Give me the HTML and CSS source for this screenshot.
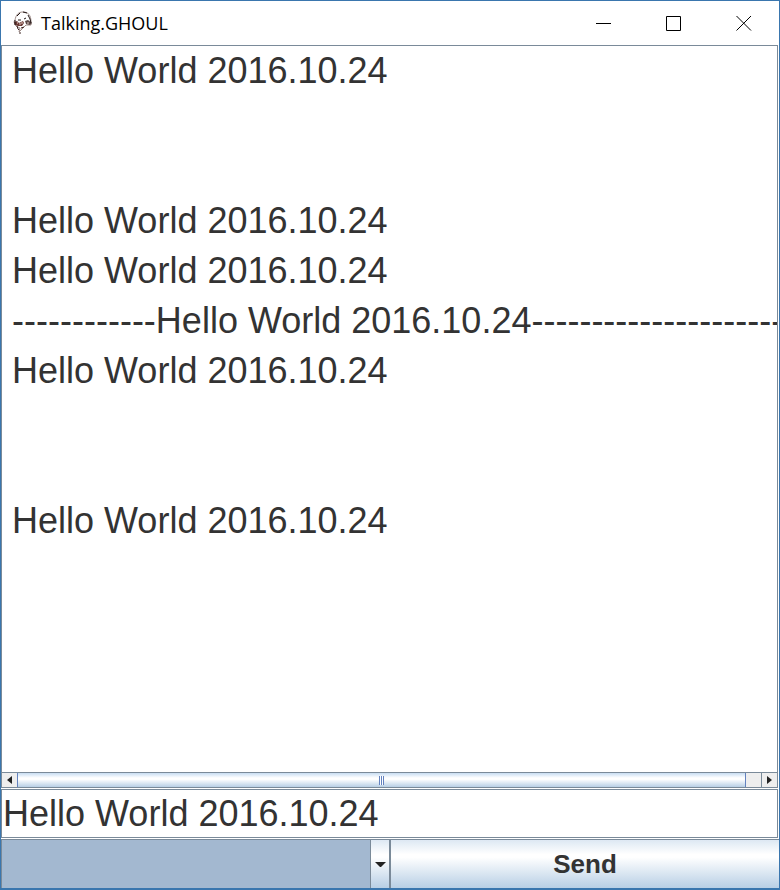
FILE: index.html
```html
<!DOCTYPE html>
<html lang="en">
<head>
    <meta charset="UTF-8">
    <meta name="viewport" content="width=device-width, initial-scale=1.0">
    <title>Talking.GHOUL</title>
    <link rel="stylesheet" href="styles.css">
</head>
<body>
    <div class="window">
        <div class="titlebar">
            <svg class="logo" viewBox="0 0 20 24" width="20" height="24">
                <path d="M2 9 C3 4 5 1 10 1 C15 1 18 4 18 11 L18 14 L13 14 L10 17 L6 21 L7 17 L3 15 L1 11 Z" fill="#fff" stroke="#9d8a86" stroke-width="1"/>
                <path d="M1 11 L4 10 L6 12 L10 10 L11 12 L9 15 L5 15 L2 14 Z" fill="#6b3a35"/>
                <path d="M12 10 L15 9 L19 12 L17 14 L13 13 Z" fill="#5b4846"/>
                <path d="M2 9 L2 14 M4 5 L7 2 M10 1 L14 2 M15 4 L17 8 L18 12 M5 9 H8 M11 8 L13 7" fill="none" stroke="#241817" stroke-width="1"/>
                <path d="M6 13 H8 M9 11 V13 M14 12 H16 M4 12 H5" stroke="#e8cfc8" stroke-width="1"/>
                <path d="M4 15 L5 18 L6 19 M8 17 L11 16 M6 22 H8" fill="none" stroke="#3b2220" stroke-width="1"/>
            </svg>
            <h1>Talking.GHOUL</h1>
            <div class="controls">
                <button type="button" aria-label="Minimize">
                    <svg width="16" height="16" viewBox="0 0 16 16"><path d="M0 8.5H15"/></svg>
                </button>
                <button type="button" aria-label="Maximize">
                    <svg width="16" height="16" viewBox="0 0 16 16"><path d="M.5 1.5H14.5V15.5H.5Z"/></svg>
                </button>
                <button type="button" aria-label="Close">
                    <svg width="16" height="16" viewBox="0 0 16 16"><path d="M.5 1L15 15.5M15 1L.5 15.5"/></svg>
                </button>
            </div>
        </div>

        <textarea class="messages" aria-label="Messages" wrap="off" readonly> Hello World 2016.10.24


 Hello World 2016.10.24
 Hello World 2016.10.24
 ------------Hello World 2016.10.24------------------------
 Hello World 2016.10.24


 Hello World 2016.10.24</textarea>

        <div class="scrollbar">
            <button type="button" class="scroll-btn" aria-label="Scroll left">
                <svg width="5" height="8" viewBox="0 0 5 8"><path d="M5 0V8L0 4Z"/></svg>
            </button>
            <div class="track">
                <div class="thumb"><span class="grip"></span></div>
            </div>
            <button type="button" class="scroll-btn" aria-label="Scroll right">
                <svg width="5" height="8" viewBox="0 0 5 8"><path d="M0 0V8L5 4Z"/></svg>
            </button>
        </div>

        <input class="message-input" type="text" aria-label="Message" value="Hello World 2016.10.24">

        <div class="bottom">
            <div class="combo">
                <select aria-label="Recipient"><option value=""></option></select>
                <span class="combo-arrow">
                    <svg width="11" height="5" viewBox="0 0 11 5"><path d="M0 0H11L6 5H5Z"/></svg>
                </span>
            </div>
            <button type="button" class="send">Send</button>
        </div>
    </div>

    <script>
        // add the typed message to the list
        const input = document.querySelector(".message-input");
        const messages = document.querySelector(".messages");

        function sendMessage() {
            if (input.value.trim() !== "") {
                messages.value += "\n " + input.value;
                messages.scrollTop = messages.scrollHeight;
            }
        }

        document.querySelector(".send").addEventListener("click", sendMessage);
    </script>
</body>
</html>
```

FILE: styles.css
```css
:root {
    --frame: #3a76ae;
    --line: #7a8a99;
    --thumb-line: #6382bf;
    --text: #333;
    --shine: linear-gradient(#dde8f3 0%, #fff 30%, #fff 36%, #b8cfe5 100%);
}

* {
    box-sizing: border-box;
}

body {
    margin: 0;
    font-family: "Liberation Sans", Arial, sans-serif;
    color: var(--text);
}

button,
input,
select,
textarea {
    margin: 0;
    border-radius: 0;
    font-family: inherit;
    color: inherit;
    outline: none;
}

.window {
    display: flex;
    flex-direction: column;
    height: 100vh;
    border: 1px solid var(--frame);
    border-bottom-width: 2px;
    background: #fff;
}

/* Title bar */
.titlebar {
    display: flex;
    align-items: center;
    height: 44px;
    padding-left: 12px;
}

.titlebar h1 {
    margin: 0 0 0 8px;
    font-family: "Open Sans", "Noto Sans", sans-serif;
    font-size: 18px;
    font-weight: normal;
    line-height: 24px;
    color: #000;
}

.controls {
    display: flex;
    height: 42px;
    margin-left: auto;
}

.controls button {
    display: flex;
    align-items: center;
    justify-content: center;
    width: 70px;
    padding: 0;
    border: none;
    background: none;
}

.controls path {
    fill: none;
    stroke: #000;
}

/* Message list */
.messages {
    display: block;
    flex: 1;
    width: calc(100% - 1px);
    padding: 0;
    border: 1px solid var(--line);
    border-bottom: none;
    resize: none;
    overflow: hidden;
    background: #fff;
    font-size: 36px;
    line-height: 50px;
}

/* Scrollbar */
.scrollbar {
    display: flex;
    height: 16px;
    margin-right: 1px;
    border: 1px solid var(--line);
    background: #eee;
}

.scroll-btn {
    display: flex;
    align-items: center;
    justify-content: center;
    width: 15px;
    padding: 0;
    border: none;
    background: #eee;
}

.scroll-btn:last-child {
    width: 16px;
    border-left: 1px solid var(--line);
}

.track {
    display: flex;
    flex: 1;
}

.thumb {
    display: flex;
    align-items: center;
    justify-content: center;
    width: 98%;
    border: 1px solid var(--thumb-line);
    border-width: 0 1px;
    background: linear-gradient(#c8ddf2 0%, #fff 35%, #fff 45%, #b8cfe5 100%);
}

.grip {
    width: 5px;
    height: 9px;
    background: repeating-linear-gradient(90deg, var(--thumb-line) 0 1px, #fff 1px 2px);
}

/* Message input */
.message-input {
    width: calc(100% - 1px);
    height: 49px;
    padding: 0 1px;
    border: 1px solid var(--line);
    margin-top: 1px;
    background: #fff;
    font-size: 36px;
}

/* Combo box and send button */
.bottom {
    display: grid;
    grid-template-columns: 1fr 1fr;
    height: 49px;
    margin-top: 1px;
}

.combo {
    position: relative;
}

.combo select {
    display: block;
    width: 100%;
    height: 100%;
    border: 1px solid var(--line);
    border-bottom: none;
    appearance: none;
    background: #a3b8d0;
}

.combo-arrow {
    position: absolute;
    top: 1px;
    right: 1px;
    bottom: 0;
    display: flex;
    align-items: center;
    justify-content: center;
    width: 19px;
    border-left: 1px solid var(--line);
    background: var(--shine);
    pointer-events: none;
}

.combo-arrow path,
.scroll-btn path {
    fill: #222;
}

.send {
    padding: 1px 0 0;
    border: 1px solid var(--line);
    border-width: 1px 0 0 1px;
    background: var(--shine);
    font-size: 26px;
    font-weight: bold;
}
```
